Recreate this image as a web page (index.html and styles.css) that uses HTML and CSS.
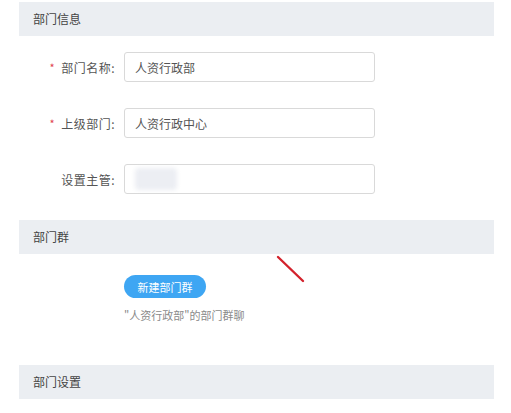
FILE: index.html
```html
<!DOCTYPE html>
<html lang="zh">
<head>
<meta charset="utf-8">
<link rel="stylesheet" href="styles.css">
</head>
<body>
<div class="page">
  <div class="section-head">部门信息</div>
  <div class="form">
    <div class="row">
      <label class="label"><span class="req">*</span>部门名称:</label>
      <div class="input">人资行政部</div>
    </div>
    <div class="row">
      <label class="label"><span class="req">*</span>上级部门:</label>
      <div class="input">人资行政中心</div>
    </div>
    <div class="row">
      <label class="label">设置主管:</label>
      <div class="input"><span class="blur"></span></div>
    </div>
  </div>
  <div class="section-head">部门群</div>
  <div class="group">
    <button class="btn">新建部门群</button>
    <div class="caption">"人资行政部"的部门群聊</div>
  </div>
  <div class="section-head">部门设置</div>
  <svg class="mark" width="30" height="30" viewBox="0 0 30 30"><line x1="2" y1="2" x2="27" y2="26" stroke="#d3222c" stroke-width="2.4" stroke-linecap="round"/></svg>
</div>
</body>
</html>
```

FILE: styles.css
```css
* { box-sizing: border-box; }
html, body { margin: 0; padding: 0; background: #fff; }
body {
  font-family: "Noto Sans CJK SC", "Noto Sans", sans-serif;
  color: #444;
  font-size: 12px;
}
.page {
  position: relative;
  width: 475px;
  margin-left: 19px;
  padding-top: 2px;
}
.section-head {
  height: 34px;
  line-height: 34px;
  background: #ebeef2;
  padding-left: 14px;
  font-size: 12px;
  color: #444;
}
.form {
  display: flex;
  flex-direction: column;
  gap: 26px;
  padding: 16px 0 26px;
}
.row {
  display: flex;
  align-items: center;
  gap: 9px;
}
.label {
  width: 96px;
  text-align: right;
  color: #555;
  font-size: 12px;
  letter-spacing: 0.5px;
  display: flex;
  justify-content: flex-end;
  align-items: center;
}
.req {
  color: #e0444c;
  margin-right: 6px;
  font-size: 11px;
}
.input {
  width: 251px;
  height: 30px;
  border: 1px solid #d9d9d9;
  border-radius: 3px;
  padding-left: 10px;
  display: flex;
  align-items: center;
  font-size: 12px;
  color: #555;
}
.blur {
  width: 42px;
  height: 22px;
  background: #eceef3;
  border-radius: 4px;
  filter: blur(2px);
}
.group {
  padding: 21px 0 42px 105px;
  display: flex;
  flex-direction: column;
  align-items: flex-start;
  gap: 9px;
}
.btn {
  width: 82px;
  height: 23px;
  border: none;
  border-radius: 12px;
  background: #3ea6f3;
  color: #fff;
  font-family: inherit;
  font-size: 11px;
  padding: 0;
}
.caption {
  color: #8a8a8a;
  font-size: 11px;
}
.mark {
  position: absolute;
  left: 257px;
  top: 255px;
}
```
